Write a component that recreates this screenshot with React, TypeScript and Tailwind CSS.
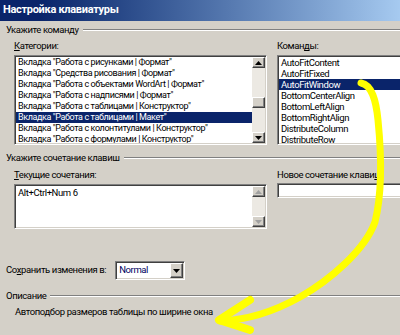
import React from "react";

const cats = [
  'Вкладка "Работа с рисунками | Формат"',
  'Вкладка "Средства рисования | Формат"',
  'Вкладка "Работа с объектами WordArt | Формат"',
  'Вкладка "Работа с надписями | Формат"',
  'Вкладка "Работа с таблицами | Конструктор"',
  'Вкладка "Работа с таблицами | Макет"',
  'Вкладка "Работа с колонтитулами | Конструктор"',
  'Вкладка "Работа с формулами | Конструктор"',
];

const cmds = [
  "AutoFitContent",
  "AutoFitFixed",
  "AutoFitWindow",
  "BottomCenterAlign",
  "BottomLeftAlign",
  "BottomRightAlign",
  "DistributeColumn",
  "DistributeRow",
];

function GroupHeader({ title }: { title: string }) {
  return (
    <div className="flex items-center pl-[6px] h-[12px] leading-[12px]">
      <span className="whitespace-nowrap">{title}</span>
      <div className="flex-1 ml-[4px] flex flex-col">
        <div className="h-px bg-[#808080]" />
        <div className="h-px bg-white" />
      </div>
    </div>
  );
}

function Arrow({ down, disabled }: { down?: boolean; disabled?: boolean }) {
  const c = disabled ? "#a0a0a0" : "#000";
  return (
    <div className="w-[13px] h-[11px] bg-[#d4d0c8] border border-t-white border-l-white border-r-[#404040] border-b-[#404040] shadow-[inset_-1px_-1px_0_#808080] flex items-center justify-center">
      <svg width="7" height="4" viewBox="0 0 7 4">
        {down ? (
          <polygon points="0,0 7,0 3.5,4" fill={c} />
        ) : (
          <polygon points="0,4 7,4 3.5,0" fill={c} />
        )}
      </svg>
    </div>
  );
}

function Sunken({ className, children }: { className?: string; children?: React.ReactNode }) {
  return (
    <div
      className={
        "border border-t-[#808080] border-l-[#808080] border-r-white border-b-white shadow-[inset_1px_1px_0_#404040,inset_-1px_-1px_0_#d4d0c8] bg-white " +
        (className ?? "")
      }
    >
      {children}
    </div>
  );
}

export default function App() {
  return (
    <div className="relative w-[400px] h-[335px] overflow-hidden bg-[#d4d0c8] text-black text-[9.5px] tracking-[-0.4px] font-['Roboto','Liberation_Sans',sans-serif]">
      {/* Title bar */}
      <div className="h-[21px] bg-gradient-to-r from-[#0a246a] from-10% to-[#a6caf0] flex items-center pl-[3px] text-white font-bold text-[11px] tracking-[-0.3px]">
        Настройка клавиатуры
      </div>

      <div className="mt-[3px]">
        <GroupHeader title="Укажите команду" />
      </div>

      <div className="flex mt-[4px] pl-[14px] gap-[10px]">
        <div className="w-[253px] shrink-0 flex flex-col">
          <div className="h-[12px] leading-[12px]">
            <span className="underline">К</span>атегории:
          </div>
          <Sunken className="mt-[3px] h-[90px] flex p-[1px]">
            <div className="flex-1 min-w-0 overflow-hidden">
              {cats.map((c, i) => (
                <div
                  key={i}
                  className={
                    "h-[11px] leading-[11px] pl-[2px] whitespace-nowrap text-[9px] " +
                    (i === 5 ? "bg-[#0a246a] text-white" : "")
                  }
                >
                  {c}
                </div>
              ))}
            </div>
            <div className="w-[13px] shrink-0 flex flex-col bg-[#ece9e3]">
              <Arrow />
              <div className="flex-1 flex flex-col pt-[29px]">
                <div className="h-[11px] bg-[#d4d0c8] border border-t-white border-l-white border-r-[#404040] border-b-[#404040] shadow-[inset_-1px_-1px_0_#808080]" />
              </div>
              <Arrow down />
            </div>
          </Sunken>
        </div>

        <div className="flex-1 min-w-[200px] flex flex-col">
          <div className="h-[12px] leading-[12px] whitespace-nowrap">
            Коман<span className="underline">д</span>ы:
          </div>
          <Sunken className="mt-[3px] h-[90px] w-[200px] p-[1px]">
            {cmds.map((c, i) => (
              <div
                key={i}
                className={
                  "h-[11px] leading-[11px] pl-[2px] whitespace-nowrap " +
                  (i === 2 ? "bg-[#0a246a] text-white" : "")
                }
              >
                {c}
              </div>
            ))}
          </Sunken>
        </div>
      </div>

      <div className="mt-[7px]">
        <GroupHeader title="Укажите сочетание клавиш" />
      </div>

      <div className="flex mt-[5px] pl-[14px] gap-[10px]">
        <div className="w-[253px] shrink-0 flex flex-col">
          <div className="h-[12px] leading-[12px]">
            <span className="underline">Т</span>екущие сочетания:
          </div>
          <Sunken className="mt-[3px] h-[45px] flex p-[1px]">
            <div className="flex-1 min-w-0 overflow-hidden">
              <div className="h-[11px] leading-[11px] pl-[2px] pt-[1px] whitespace-nowrap">
                Alt+Ctrl+Num 6
              </div>
            </div>
            <div className="w-[13px] shrink-0 flex flex-col justify-between bg-[#ece9e3]">
              <Arrow disabled />
              <Arrow down disabled />
            </div>
          </Sunken>
        </div>

        <div className="flex-1 min-w-[200px] flex flex-col">
          <div className="h-[12px] leading-[12px] whitespace-nowrap">
            Новое сочетание клави<span className="underline">ш</span>
          </div>
          <Sunken className="mt-[2px] h-[15px] w-[200px]" />
        </div>
      </div>

      <div className="flex items-center mt-[32px] pl-[6px]">
        <span className="whitespace-nowrap">
          Со<span className="underline">х</span>ранить изменения в:
        </span>
        <Sunken className="ml-[9px] w-[70px] h-[19px] flex items-center p-[1px]">
          <span className="flex-1 pl-[2px] text-[#000060]">Normal</span>
          <div className="w-[13px] h-[15px] bg-[#d4d0c8] border border-t-white border-l-white border-r-[#404040] border-b-[#404040] shadow-[inset_-1px_-1px_0_#808080] flex items-center justify-center">
            <svg width="7" height="4" viewBox="0 0 7 4">
              <polygon points="0,0 7,0 3.5,4" fill="#000" />
            </svg>
          </div>
        </Sunken>
      </div>

      <div className="mt-[10px]">
        <GroupHeader title="Описание" />
      </div>

      <div className="mt-[4px] pl-[15px] h-[12px] leading-[12px] whitespace-nowrap">
        Автоподбор размеров таблицы по ширине окна
      </div>

      {/* Yellow hand-drawn arrow overlay */}
      <svg
        className="absolute left-0 top-0 pointer-events-none"
        width="400"
        height="335"
        viewBox="0 0 400 335"
      >
        <path
          d="M361,83 C372,85 376,100 378,120 C381,150 383,190 375,222 C365,250 330,280 300,297 C275,311 250,320 220,321"
          fill="none"
          stroke="#ffff00"
          strokeWidth="7"
          strokeLinecap="round"
          strokeLinejoin="round"
        />
        <path
          d="M250,300 L219,320 L250,330"
          fill="none"
          stroke="#ffff00"
          strokeWidth="8"
          strokeLinecap="round"
          strokeLinejoin="round"
        />
      </svg>
    </div>
  );
}
